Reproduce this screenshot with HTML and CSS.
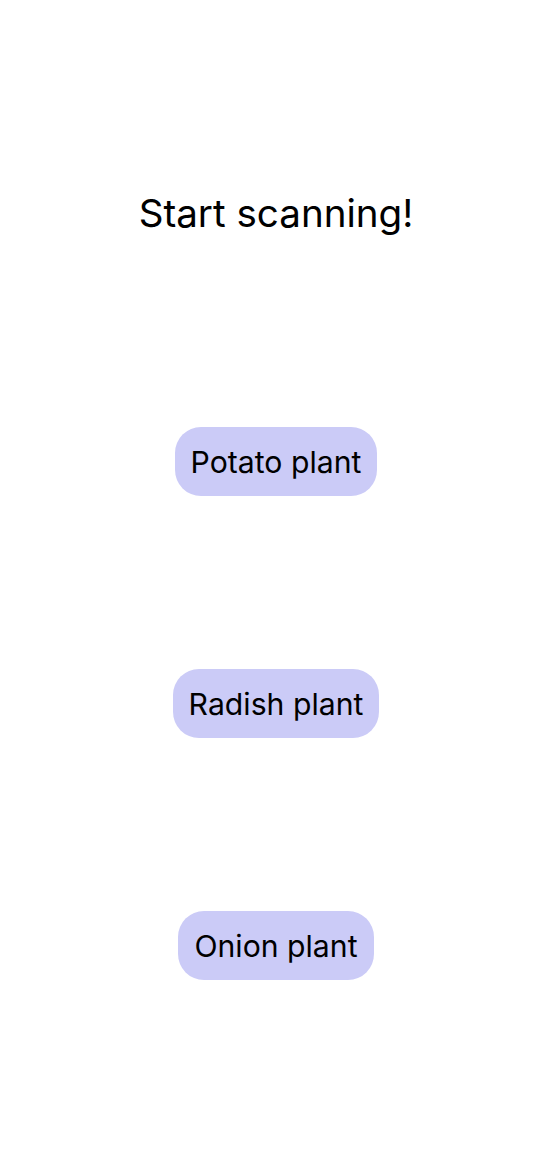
FILE: index.html
```html
<!DOCTYPE html>
<html lang="en">
<head>
<meta charset="utf-8">
<title>Start scanning</title>
<link rel="stylesheet" href="styles.css">
</head>
<body>
<main class="screen">
  <h1 class="title">Start scanning!</h1>
  <div class="choices">
    <button class="choice">Potato plant</button>
    <button class="choice">Radish plant</button>
    <button class="choice">Onion plant</button>
  </div>
</main>
</body>
</html>
```

FILE: styles.css
```css
html, body {
  margin: 0;
  padding: 0;
  background: #ffffff;
}

body {
  font-family: Inter, "Noto Sans", "Liberation Sans", sans-serif;
  color: #000000;
}

.screen {
  display: flex;
  flex-direction: column;
  align-items: center;
  padding-top: 189px;
}

.title {
  margin: 0;
  font-size: 38.6px;
  font-weight: 400;
  line-height: 48px;
}

.choices {
  display: flex;
  flex-direction: column;
  align-items: center;
  gap: 173px;
  margin-top: 190px;
}

.choice {
  height: 69px;
  padding: 0 16px;
  border: none;
  border-radius: 26px;
  background: #cbcbf7;
  font-family: inherit;
  font-size: 30.2px;
  font-weight: 400;
  color: #000000;
  cursor: pointer;
}
```
